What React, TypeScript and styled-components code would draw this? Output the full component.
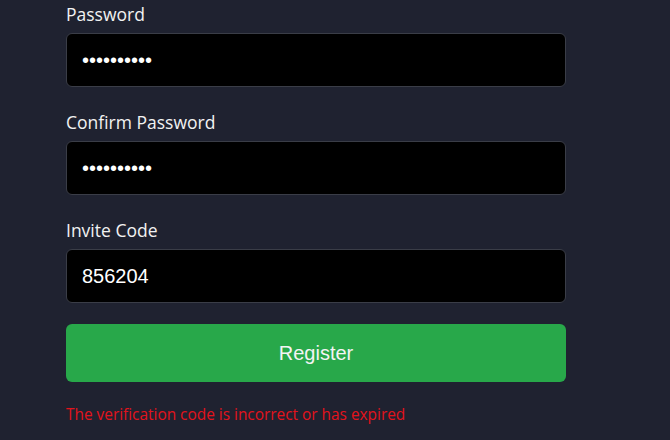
import React from 'react'
import styled, { createGlobalStyle } from 'styled-components'

const GlobalStyle = createGlobalStyle`
  html, body {
    margin: 0;
    padding: 0;
    background: #1f2230;
  }
  * { box-sizing: border-box; }
`

const Page = styled.div`
  min-height: 440px;
  background: #1f2230;
  padding: 1px 104px 0 66px;
  overflow: hidden;
`

const Form = styled.form`
  width: 500px;
  display: flex;
  flex-direction: column;
`

const Field = styled.div`
  display: flex;
  flex-direction: column;
  margin-bottom: 22px;
`

const Label = styled.label`
  font-family: 'Open Sans', 'Noto Sans', sans-serif;
  font-size: 17.5px;
  line-height: 26px;
  color: #f2f2f2;
  margin-bottom: 6px;
`

const Input = styled.input`
  height: 54px;
  width: 100%;
  background: #000;
  border: 1px solid #3a3d47;
  border-radius: 6px;
  padding: 0 15px;
  color: #fff;
  font-family: 'Liberation Sans', Arial, sans-serif;
  font-size: 20px;
  outline: none;
`

const Button = styled.button`
  height: 58px;
  width: 100%;
  border: none;
  border-radius: 6px;
  background: #28a84a;
  color: #f4f4f4;
  font-family: 'Liberation Sans', Arial, sans-serif;
  font-size: 20px;
  cursor: pointer;
  margin-top: -1px;
`

const ErrorText = styled.p`
  margin: 22px 0 0;
  font-family: 'Open Sans', 'Noto Sans', sans-serif;
  font-size: 15.4px;
  line-height: 22px;
  color: #e3131c;
`

export default function App() {
  return (
    <>
      <GlobalStyle />
      <Page>
        <Form onSubmit={e => e.preventDefault()}>
          <Field>
            <Label>Password</Label>
            <Input type="password" defaultValue="1234567890" />
          </Field>
          <Field>
            <Label>Confirm Password</Label>
            <Input type="password" defaultValue="1234567890" />
          </Field>
          <Field>
            <Label>Invite Code</Label>
            <Input type="text" defaultValue="856204" />
          </Field>
          <Button type="submit">Register</Button>
          <ErrorText>The verification code is incorrect or has expired</ErrorText>
        </Form>
      </Page>
    </>
  )
}
